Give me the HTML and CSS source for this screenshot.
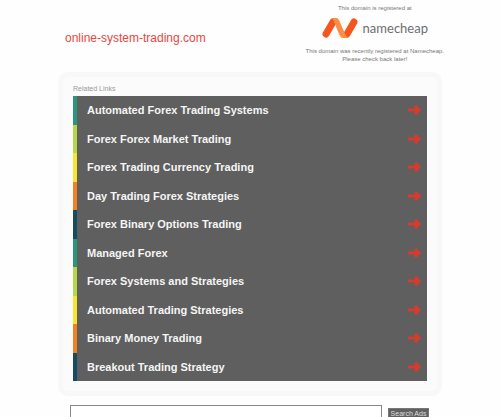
FILE: index.html
```html
<!DOCTYPE html>
<html lang="en">
<head>
    <meta charset="UTF-8">
    <meta name="viewport" content="width=device-width, initial-scale=1.0">
    <title>online-system-trading.com</title>
    <link rel="stylesheet" href="styles.css">
</head>
<body>
    <div class="container">
        <header class="header">
            <h1 class="domain">online-system-trading.com</h1>
            <div class="registrar">
                <p>This domain is registered at</p>
                <a class="logo" href="#">
                    <svg width="36" height="20" viewBox="0 0 36 20" aria-hidden="true">
                        <path d="M4 16 L11 4" stroke="#f4561e" stroke-width="7" stroke-linecap="round"/>
                        <path d="M25 16 L32 4" stroke="#f4561e" stroke-width="7" stroke-linecap="round"/>
                        <path d="M10 0 H13 Q16 0 17 3 L23 17 Q24 19 26 20 H22 Q19 20 18 17 L13 5 Q12 1 10 0 Z" fill="#ff8c44" stroke="#ff8c44" stroke-width="1"/>
                    </svg>
                    <span>namecheap</span>
                </a>
                <p>This domain was recently registered at Namecheap.<br>Please check back later!</p>
            </div>
        </header>

        <main class="panel">
            <h2 class="panel-title">Related Links</h2>
            <ul class="links">
                <li class="green"><a href="#">Automated Forex Trading Systems</a></li>
                <li class="lime"><a href="#">Forex Forex Market Trading</a></li>
                <li class="yellow"><a href="#">Forex Trading Currency Trading</a></li>
                <li class="orange"><a href="#">Day Trading Forex Strategies</a></li>
                <li class="navy"><a href="#">Forex Binary Options Trading</a></li>
                <li class="green"><a href="#">Managed Forex</a></li>
                <li class="lime"><a href="#">Forex Systems and Strategies</a></li>
                <li class="yellow"><a href="#">Automated Trading Strategies</a></li>
                <li class="orange"><a href="#">Binary Money Trading</a></li>
                <li class="navy"><a href="#">Breakout Trading Strategy</a></li>
            </ul>
        </main>

        <form class="search">
            <input type="text" name="q" aria-label="Search Ads">
            <button type="submit">Search Ads</button>
        </form>
    </div>

    <script>
        // same arrow at the end of every link
        document.querySelectorAll('.links a').forEach(link => {
            link.insertAdjacentHTML('beforeend', `
                <svg class="arrow" width="16" height="12" viewBox="0 0 16 12" aria-hidden="true">
                    <path d="M1 6 H12 M8 2 L12 6 L8 10" fill="none" stroke="#d93a2e" stroke-width="3"/>
                </svg>`);
        });
    </script>
</body>
</html>
```

FILE: styles.css
```css
* {
    box-sizing: border-box;
}
body {
    height: 100vh;
    margin: 0;
    overflow: hidden;
    background-color: #fefefe;
    font-family: "Liberation Sans", Arial, sans-serif;
}
.container {
    max-width: 384px;
    margin: 0 auto;
}
.header {
    display: flex;
    justify-content: space-between;
    height: 72px;
    padding: 4px 0 0 7px;
}
.domain {
    margin: 27px 0 0;
    color: #e8473f;
    font-size: 12px;
    line-height: 14px;
    font-weight: normal;
}
.registrar {
    margin-right: -2px;
    color: #777;
    font-size: 6px;
    line-height: 8px;
    text-align: center;
}
.registrar p {
    margin: 0;
}
.logo {
    display: flex;
    align-items: center;
    justify-content: center;
    gap: 5px;
    margin: 6px 0 9px;
    color: #6d6e70;
    font-family: Lato, sans-serif;
    font-size: 13px;
    line-height: 20px;
    text-decoration: none;
}
.panel {
    padding: 8px 10px 10px;
    border: 5px solid #f8f8f8;
    border-radius: 10px;
    background-color: #fbfbfb;
}
.panel-title {
    margin: 0 0 3px;
    color: #999;
    font-size: 7px;
    line-height: 8px;
    font-weight: normal;
}
.links {
    display: grid;
    grid-auto-rows: 1fr;
    height: 285px;
    margin: 0;
    padding: 0;
    background-color: #5f5f5f;
    list-style: none;
}
.links li {
    display: flex;
    border-left: 4px solid;
}
.links a {
    display: flex;
    flex: 1;
    align-items: center;
    justify-content: space-between;
    padding: 0 4px 0 10px;
    color: #f5f5f5;
    font-size: 11px;
    font-weight: bold;
    text-decoration: none;
}
.links .green {
    border-color: #2a967c;
}
.links .lime {
    border-color: #b5d84b;
}
.links .yellow {
    border-color: #f8e52c;
}
.links .orange {
    border-color: #f5801f;
}
.links .navy {
    border-color: #174a63;
}
.search {
    display: flex;
    align-items: flex-start;
    gap: 6px;
    padding: 9px 13px 0 12px;
}
.search input {
    flex: 1;
    min-width: 0;
    height: 20px;
    border: 1px solid #888;
    background-color: #fff;
}
.search button {
    width: 41px;
    height: 12px;
    margin-top: 3px;
    padding: 0;
    border: 1px solid #777;
    background-color: #606060;
    color: #ddd;
    font-family: inherit;
    font-size: 7px;
    line-height: 8px;
}
```
